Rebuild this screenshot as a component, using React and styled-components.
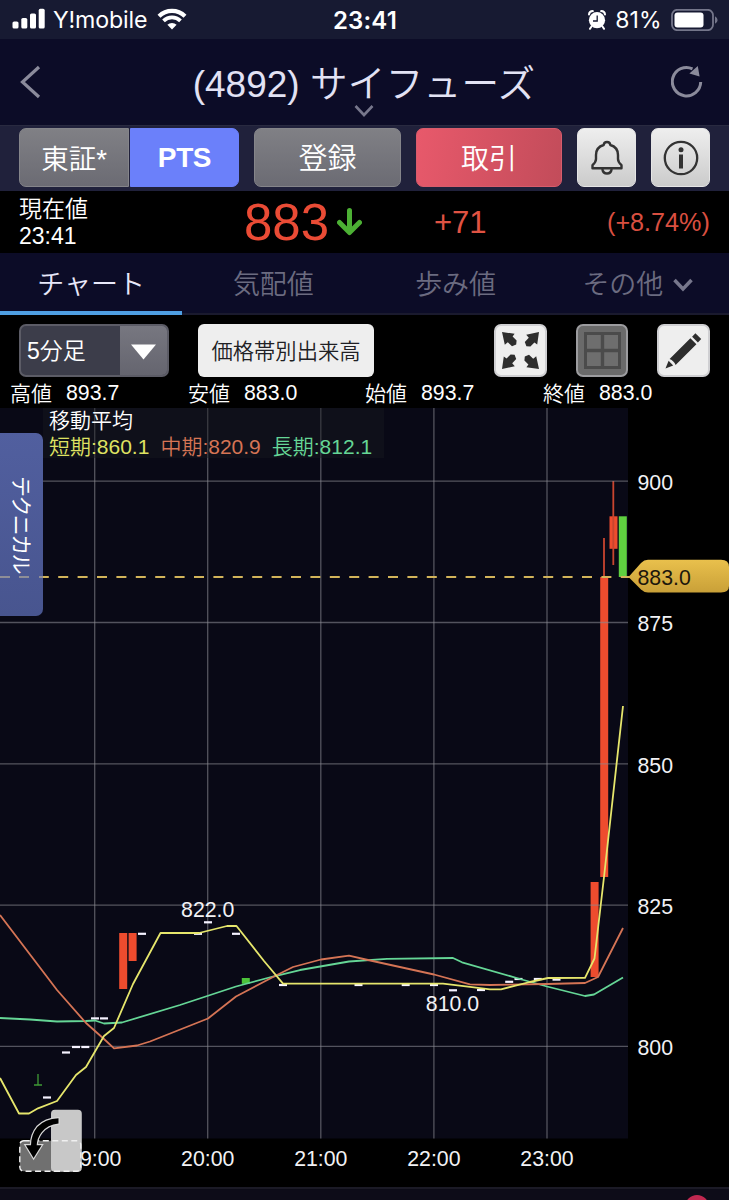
import React from "react";
import styled, { createGlobalStyle } from "styled-components";

const latin = `"Liberation Sans", "Noto Sans CJK JP", sans-serif`;

const Global = createGlobalStyle`
  * { box-sizing: border-box; }
  body { margin: 0; background: #000; font-family: ${latin}; font-weight: 350; overflow: hidden; }
`;

const Screen = styled.div`
  width: 729px;
  height: 1200px;
  overflow: hidden;
  display: flex;
  flex-direction: column;
  color: #fff;
  white-space: nowrap;
`;

const Label = styled.span`
  display: block;
  font-size: ${(p) => p.$size}px;
  line-height: 1;
  font-weight: ${(p) => p.$weight || 350};
  letter-spacing: ${(p) => p.$track || 0}px;
  color: ${(p) => p.$color || "inherit"};
  transform: translateY(${(p) => p.$dy || 0}px);
`;

const Kana = styled.span`
  display: inline-block;
  font-size: 37.6px;
  line-height: 1;
  letter-spacing: 0.3px;
  transform: translateY(-0.5px);
`;

const StatusBar = styled.header`
  height: 39px;
  flex: none;
  background: #171a32;
  display: grid;
  grid-template-columns: 1fr auto 1fr;
  align-items: center;
  padding: 0 11px 0 12px;
  font-family: Inter, sans-serif;
`;

const StatusGroup = styled.div`
  display: flex;
  align-items: center;
  gap: ${(p) => p.$gap}px;
  justify-content: ${(p) => (p.$end ? "flex-end" : "flex-start")};
`;

const TitleBar = styled.div`
  height: 86px;
  flex: none;
  background: #0c0c27;
  display: grid;
  grid-template-columns: 44px 1fr 44px;
  align-items: center;
  padding: 0 26px 0 12px;
  color: #e2e2f4;
`;

const TitleStack = styled.div`
  display: flex;
  flex-direction: column;
  align-items: center;
  gap: 2px;
  padding: 19px 0 0 13px;
`;

const ActionBar = styled.div`
  height: 66px;
  flex: none;
  background: #20213b;
  border-top: 1px solid #292a40;
  display: flex;
  padding: 2px 19px 0;
`;

const Action = styled.button`
  width: ${(p) => p.$w}px;
  height: 59px;
  margin: 0 ${(p) => p.$gap ?? 15}px 0 0;
  padding: 0;
  border: 1px solid ${(p) => p.$edge || "#85858a"};
  border-radius: ${(p) => p.$radius || "7px"};
  background: ${(p) => p.$bg || "linear-gradient(#808085, #6b6b73)"};
  color: #fff;
  display: flex;
  align-items: center;
  justify-content: center;
  font-family: inherit;
`;

const PriceBar = styled.div`
  height: 62px;
  flex: none;
  background: #000;
  display: grid;
  grid-template-columns: 225px 190px 173px 1fr;
  align-items: center;
  padding: 0 19px;
`;

const NowLabel = styled.div`
  display: flex;
  flex-direction: column;
  gap: 4px;
`;

const PriceValue = styled.div`
  display: flex;
  align-items: center;
  gap: 8px;
`;

const Tabs = styled.nav`
  height: 62px;
  flex: none;
  background: #0c0c27;
  border-bottom: 2px solid #1a1a2e;
  display: grid;
  grid-template-columns: repeat(4, 1fr);
`;

const Tab = styled.div`
  height: 62px;
  display: flex;
  gap: 10px;
  align-items: center;
  justify-content: center;
  padding-top: 6px;
  color: ${(p) => (p.$on ? "#e8e8fa" : "#6b6b80")};
  border-bottom: 4px solid ${(p) => (p.$on ? "#4f9fe2" : "transparent")};
`;

const Controls = styled.div`
  height: 66px;
  flex: none;
  display: flex;
  padding: 9px 18px 0 19px;
`;

const Interval = styled.div`
  width: 150px;
  height: 53px;
  border: 2px solid #5c5c66;
  border-radius: 7px;
  background: #3c3d4a;
  display: flex;
  overflow: hidden;
`;

const IntervalText = styled.div`
  flex: 1;
  display: flex;
  align-items: center;
  padding: 2px 0 0 6px;
`;

const IntervalArrow = styled.div`
  width: 47px;
  background: linear-gradient(#777780, #65656f);
  display: flex;
  align-items: center;
  justify-content: center;
  padding-top: 3px;
`;

const VolumeButton = styled.div`
  width: 176px;
  height: 53px;
  margin: 0 120px 0 29px;
  border-radius: 6px;
  background: #eeeeee;
  color: #202024;
  display: flex;
  align-items: center;
  justify-content: center;
`;

const Tool = styled.div`
  width: 52.5px;
  height: 53px;
  margin-right: ${(p) => (p.$last ? 0 : 29)}px;
  border: 2px solid ${(p) => (p.$dim ? "#9c9c9f" : "#cfcfd2")};
  border-radius: 7px;
  background: ${(p) => (p.$dim ? "#6a6a6a" : "#eeeeee")};
  flex: none;
`;

const Quotes = styled.div`
  height: 27px;
  flex: none;
  display: grid;
  grid-template-columns: 178px 177px 178px 1fr;
  align-items: center;
  padding: 0 0 2px 10px;
`;

const Quote = styled.div`
  display: flex;
  gap: 14px;
`;

const ChartArea = styled.div`
  position: relative;
  height: 779px;
  flex: none;
`;

const Legend = styled.div`
  position: absolute;
  left: 43px;
  top: 0;
  width: 341px;
  height: 50px;
  padding: 2px 0 0 6px;
  background: rgba(24, 27, 30, 0.45);
  display: flex;
  flex-direction: column;
  gap: 5px;
`;

const LegendRow = styled.div`
  display: flex;
  gap: 11px;
`;

const Technical = styled.div`
  position: absolute;
  left: 0;
  top: 25px;
  width: 43px;
  height: 183px;
  border-radius: 0 7px 7px 0;
  background: linear-gradient(#515f9f, #48558f);
  display: flex;
  align-items: center;
  justify-content: center;
  &::after {
    content: "";
    position: absolute;
    left: 0;
    right: 0;
    top: 143px;
    height: 2px;
    background: repeating-linear-gradient(90deg, #8e8e97 0 10px, transparent 10px 19.4px);
  }
`;

const VerticalText = styled.span`
  writing-mode: vertical-rl;
  text-orientation: sideways;
  font-size: 21px;
  line-height: 1;
  letter-spacing: -1.6px;
  font-weight: 400;
`;

const Rotate = styled.div`
  position: absolute;
  left: 18px;
  top: 701px;
`;

const BottomBar = styled.footer`
  height: 13px;
  flex: none;
  background: #0d0c18;
  border-top: 2px solid #1b1a26;
  overflow: hidden;
  padding: 6px 0 0 685px;
`;

const Badge = styled.div`
  width: 24px;
  height: 24px;
  border-radius: 50%;
  background: #c02850;
`;

const SignalIcon = () => (
  <svg width="33" height="22" viewBox="0 0 33 22" fill="#fff">
    <rect x="0.5" y="13.5" width="6" height="7" rx="1.6" />
    <rect x="9.3" y="10" width="6" height="10.5" rx="1.6" />
    <rect x="18" y="5.5" width="6" height="15" rx="1.6" />
    <rect x="26.7" y="0.8" width="6" height="19.7" rx="1.6" />
  </svg>
);

const WifiIcon = () => (
  <svg width="34" height="22" viewBox="-2 0 34 22" fill="none" stroke="#fff">
    <path d="M2 8.2 A18.6 18.6 0 0 1 28 8.2" strokeWidth="4.2" />
    <path d="M6.5 12.8 A12.2 12.2 0 0 1 23.5 12.8" strokeWidth="3.8" />
    <path d="M15 21.5 L10.4 16.8 A6.5 6.5 0 0 1 19.6 16.8 Z" fill="#fff" stroke="none" />
  </svg>
);

const AlarmIcon = () => (
  <svg width="18" height="20" viewBox="0 0 18 20">
    <circle cx="9" cy="10.2" r="8.1" fill="#fff" />
    <path d="M1 4.5 Q1.2 1.2 4.8 1.1 M17 4.5 Q16.8 1.2 13.2 1.1" stroke="#fff" strokeWidth="2" fill="none" strokeLinecap="round" />
    <path d="M3.5 16.5 L2 18.8 M14.5 16.5 L16 18.8" stroke="#fff" strokeWidth="2" strokeLinecap="round" />
    <path d="M9.2 5.5 V11 H5" stroke="#171a32" strokeWidth="1.3" fill="none" />
  </svg>
);

const BatteryIcon = () => (
  <svg width="47" height="22" viewBox="0 0 47 22">
    <rect x="1" y="0.8" width="41" height="20.4" rx="5.5" fill="none" stroke="#74768a" strokeWidth="1.8" />
    <rect x="3.5" y="3.4" width="29" height="15.2" rx="3" fill="#fff" />
    <path d="M44 7.2 Q46.6 8.6 46.6 11 Q46.6 13.4 44 14.8Z" fill="#74768a" />
  </svg>
);

const ReloadIcon = () => (
  <svg width="32" height="34" viewBox="0 0 32 34">
    <path d="M21.5 3.8 A14.2 14.2 0 1 0 29.7 17" fill="none" stroke="#8b8b9b" strokeWidth="3" />
    <path d="M26.8 1 L28.6 11.6 L18.4 8.6 Z" fill="#8b8b9b" />
  </svg>
);

const BellIcon = () => (
  <svg width="34" height="36" viewBox="0 0 34 36" fill="none" stroke="#333" strokeWidth="2.4" strokeLinejoin="round">
    <path d="M2.5 28.3 V25.2 Q6 22 6 19 V15 Q6 7.2 13.7 5 Q14 2 17 2 Q20 2 20.3 5 Q28 7.2 28 15 V19 Q28 22 31.5 25.2 V28.3 Z" />
    <path d="M12.3 29 Q13 33.5 17 33.5 Q21 33.5 21.7 29" />
  </svg>
);

const InfoIcon = () => (
  <svg width="36" height="36" viewBox="0 0 36 36">
    <circle cx="18" cy="18" r="16.2" fill="none" stroke="#333" strokeWidth="2.3" />
    <circle cx="18" cy="9.8" r="2.5" fill="#333" />
    <path d="M18 14.5 V28.5" stroke="#333" strokeWidth="4" />
  </svg>
);

const ExpandIcon = () => (
  <svg width="49" height="49" viewBox="0 0 49 49" fill="#2d2d2d">
    {[0, 90, 180, 270].map((a) => (
      <path key={a} transform={`rotate(${a} 24.5 24.5)`} d="M6 6 L18.6 7.8 L16.6 10.6 L20.6 14.6 L20.2 18.6 L16 20.2 L11.8 16.2 L8.8 18.8 Z" />
    ))}
  </svg>
);

const GridIcon = () => (
  <svg width="49" height="49" viewBox="0 0 49 49">
    <rect x="7.5" y="7.5" width="34" height="34" fill="#6e6e6e" stroke="#4b4b4b" strokeWidth="3" />
    <path d="M24.5 7 V42 M7 24.5 H42" stroke="#4b4b4b" strokeWidth="3.4" />
  </svg>
);

const PencilIcon = () => (
  <svg width="49" height="49" viewBox="0 0 49 49" fill="#2d2d2d">
    <path d="M6.5 42.5 L9.6 34.8 L14.2 39.4 Z" />
    <path d="M10.6 33 L31.4 12.2 L37.4 18.2 L16.6 39 Q15 34.8 10.6 33 Z" />
    <path d="M33.1 10.7 L36.4 7.2 L42.2 13 L38.9 16.5 Z" />
  </svg>
);

const RotateIcon = () => (
  <svg width="65" height="64" viewBox="0 0 65 64">
    <rect x="1.8" y="31.8" width="61" height="30.5" rx="4" fill="#707070" />
    <rect x="33" y="0.8" width="30.8" height="62" rx="4" fill="#c8c8c8" />
    <rect x="1.8" y="31.8" width="61" height="30.5" rx="4" fill="none" stroke="#f0f0f0" strokeWidth="1.4" strokeDasharray="6 3.5" />
    <path d="M40.5 9.2 V14.6 Q29.5 15.8 23.4 23.5 Q19 29.2 18.7 36.2 H23.6 L15.6 49 L7.8 36.2 H13 Q13 25.6 19.3 17.9 Q27 9.8 40.5 9.2 Z" fill="#000" stroke="#d8d8d8" strokeWidth="2.4" paintOrder="stroke" />
  </svg>
);

const hours = [
  [94.7, "19:00"],
  [207.7, "20:00"],
  [320.8, "21:00"],
  [433.9, "22:00"],
  [547, "23:00"],
];
const levels = [
  [481.2, "900"],
  [622.5, "875"],
  [763.8, "850"],
  [905.1, "825"],
  [1046.4, "800"],
];
const flats = [
  [47, 1097.5], [66, 1052.5], [76, 1047], [85.3, 1047], [95, 1018.4], [104, 1018.4], [142, 933.8],
  [198, 933.8], [208, 922.3], [236, 933.8], [283, 985], [358.5, 985], [405.7, 985], [434, 985],
  [453, 990.3], [481, 990], [509.2, 981.8], [518.5, 979], [537.8, 979], [556.5, 979.6],
];
const bodies = [
  [119.2, 933, 56, "#ee4c2e"], [128.6, 933, 28, "#ee4c2e"],
  [590.6, 882, 95, "#ee4c2e"], [600.2, 577, 300, "#ee4c2e"],
  [609.5, 516.3, 32.5, "#ee4c2e"], [618.8, 516.3, 60.7, "#5fd040"],
  [241.8, 978, 5.8, "#4cc23a"],
];
const shortLine = "0,1078 19,1113.5 29,1113.5 38,1108.3 57,1101 76,1075 86,1067 104,1036 114,1028 133,984 160.5,933 199,933 227,926 236.5,926 264,961 283,983.7 443,983.7 470,986.8 490,989.3 501,989.3 530,982 548,978 585,977.8 594.5,958.5 604,877 623,706";
const midLine = "0,915 57,990 86,1023 104,1039 114,1048.3 137,1045.5 150,1041.5 208,1018.5 236,996.5 274,976.5 293,967 321,959.5 349,955.7 368,960 434,974.5 470,984.3 490,985 547,984 585,983 598,977 623,928";
const longLine = "0,1018 30,1019.5 57,1021.5 86,1021 95,1020.5 104,1023.5 122,1022.5 180,1005 236,986.5 273,976.5 300,970 349,961.5 387,958.8 453,958 462,962.3 520,979 547,986.5 585,996 594,994.5 623,977.5";

const ChartSvg = styled.svg`
  display: block;
  font-family: ${latin};
  font-size: 21.3px;
  font-weight: 400;
`;

const Chart = () => (
  <ChartSvg width="729" height="779" viewBox="0 408 729 779">
    <rect x="0" y="408" width="628" height="730.5" fill="#090916" />
    {bodies.map(([x, y, h, c]) => (
      <rect key={x} x={x} y={y} width={8} height={h} fill={c} />
    ))}
    <path d="M604 538V577M613.3 481V565" stroke="#c9452f" strokeWidth="1.8" />
    <path d="M38 1074V1085M34 1085H42" stroke="#3f9a36" strokeWidth="1.3" />
    <g stroke="#8a8a92" strokeOpacity="0.58" strokeWidth="1.3">
      {hours.map(([x]) => <line key={x} x1={x} x2={x} y1="408" y2="1138.5" />)}
      {levels.map(([y]) => <line key={y} x1="0" x2="628" y1={y} y2={y} />)}
    </g>
    <g fill="#f5f2ff">
      {flats.map(([x, y]) => <rect key={x} x={x - 4} y={y - 1.1} width="8" height="2.2" />)}
    </g>
    <g fill="none" strokeWidth="1.8" strokeLinejoin="round">
      <polyline points={longLine} stroke="#65d696" />
      <polyline points={midLine} stroke="#d57455" />
      <polyline points={shortLine} stroke="#e6e66c" />
    </g>
    <line x1="0" x2="630" y1="577" y2="577" stroke="#d2b45a" strokeWidth="1.9" strokeDasharray="10 9.4" />
    <path d="M628.5 577 L641 563 Q644 559.8 648 559.8 H721 Q729 559.8 729 567 V586 Q729 592.5 721 592.5 H648 Q644 592.5 641 589.5 Z" fill="url(#gold)" />
    <defs>
      <linearGradient id="gold" x1="0" x2="0" y1="0" y2="1">
        <stop offset="0" stopColor="#e9c04c" />
        <stop offset="1" stopColor="#c9a038" />
      </linearGradient>
    </defs>
    <g fill="#f2f2f5">
      {levels.map(([y, t]) => (
        <text key={t} x="637.5" y={y + 8.8}>{t}</text>
      ))}
      {hours.map(([x, t]) => (
        <text key={t} x={x} y="1166" textAnchor="middle">{t}</text>
      ))}
      <text x="207.7" y="917" textAnchor="middle">822.0</text>
      <text x="452.5" y="1010.5" textAnchor="middle">810.0</text>
    </g>
    <text x="637.5" y="584.7" fill="#1c170c">883.0</text>
  </ChartSvg>
);

const quotes = [["高値", "893.7"], ["安値", "883.0"], ["始値", "893.7"], ["終値", "883.0"]];

export default function App() {
  return (
    <>
      <Global />
      <Screen>
        <StatusBar>
          <StatusGroup $gap={8}>
            <SignalIcon />
            <Label $size={23.2} $weight={400} $track={-0.15} $dy={1}>Y!mobile</Label>
            <WifiIcon />
          </StatusGroup>
          <Label $size={24} $weight={600} $track={0.2} $dy={0.5}>23:41</Label>
          <StatusGroup $gap={9.5} $end>
            <AlarmIcon />
            <Label $size={23} $weight={400} $dy={1}>81%</Label>
            <BatteryIcon />
          </StatusGroup>
        </StatusBar>

        <TitleBar>
          <svg width="34" height="36" viewBox="0 0 34 36" fill="none" stroke="#8b8b9b" strokeWidth="3.2">
            <path d="M27 3 L10.5 18 L27 33" />
          </svg>
          <TitleStack>
            <Label $size={37} $dy={1}>(4892) <Kana>サイフューズ</Kana></Label>
            <svg width="20" height="14" viewBox="0 0 20 14" fill="none" stroke="#77778c" strokeWidth="2.6">
              <path d="M1.5 2 L10 11 L18.5 2" />
            </svg>
          </TitleStack>
          <StatusGroup $end><ReloadIcon /></StatusGroup>
        </TitleBar>

        <ActionBar>
          <Action $w={110} $gap={1} $radius="7px 0 0 7px"><Label $size={27.5} $dy={1.5}>東証*</Label></Action>
          <Action $w={109} $radius="0 7px 7px 0" $bg="#6b80fa" $edge="#6b80fa"><Label $size={28} $weight={700} $track={-0.4}>PTS</Label></Action>
          <Action $w={147}><Label $size={29} $dy={2}>登録</Label></Action>
          <Action $w={146} $bg="linear-gradient(100deg, #e8596b, #c24c5a)" $edge="#d85c6c"><Label $size={28} $dy={2}>取引</Label></Action>
          <Action $w={59} $bg="linear-gradient(#eeeeee, #cbcbcb)" $edge="#e5e5e5"><BellIcon /></Action>
          <Action $w={59} $gap={0} $bg="linear-gradient(#eeeeee, #cbcbcb)" $edge="#e5e5e5"><InfoIcon /></Action>
        </ActionBar>

        <PriceBar>
          <NowLabel>
            <Label $size={23} $dy={1}>現在値</Label>
            <Label $size={23} $dy={1}>23:41</Label>
          </NowLabel>
          <PriceValue>
            <Label $size={51} $color="#ea4b35">883</Label>
            <svg width="25" height="28" viewBox="0 0 25 28" fill="none" stroke="#4cb034" strokeWidth="5">
              <path d="M12.5 2.5 V24 M2.5 14.5 L12.5 24.5 L22.5 14.5" strokeLinecap="round" strokeLinejoin="round" />
            </svg>
          </PriceValue>
          <Label $size={31} $color="#e05343">+71</Label>
          <Label $size={25.2} $color="#d94f40" $dy={1}>(+8.74%)</Label>
        </PriceBar>

        <Tabs>
          <Tab $on><Label $size={27}>チャート</Label></Tab>
          <Tab><Label $size={27}>気配値</Label></Tab>
          <Tab><Label $size={27}>歩み値</Label></Tab>
          <Tab>
            <Label $size={27}>その他</Label>
            <svg width="20" height="14" viewBox="0 0 20 14" fill="none" stroke="#77778c" strokeWidth="3.5">
              <path d="M1.5 2 L10 11 L18.5 2" />
            </svg>
          </Tab>
        </Tabs>

        <Controls>
          <Interval>
            <IntervalText><Label $size={23}>5分足</Label></IntervalText>
            <IntervalArrow>
              <svg width="25" height="16" viewBox="0 0 25 16"><path d="M0 0.5H25L12.5 15.5Z" fill="#fff" /></svg>
            </IntervalArrow>
          </Interval>
          <VolumeButton><Label $size={21.3} $dy={1.5}>価格帯別出来高</Label></VolumeButton>
          <Tool><ExpandIcon /></Tool>
          <Tool $dim><GridIcon /></Tool>
          <Tool $last><PencilIcon /></Tool>
        </Controls>

        <Quotes>
          {quotes.map(([k, v]) => (
            <Quote key={k}>
              <Label $size={21}>{k}</Label>
              <Label $size={21.3} $dy={-0.5}>{v}</Label>
            </Quote>
          ))}
        </Quotes>

        <ChartArea>
          <Chart />
          <Legend>
            <Label $size={21}>移動平均</Label>
            <LegendRow>
              <Label $size={21} $color="#dfe262">短期:860.1</Label>
              <Label $size={21} $color="#d57455">中期:820.9</Label>
              <Label $size={21} $color="#65d696">長期:812.1</Label>
            </LegendRow>
          </Legend>
          <Technical><VerticalText>テクニカル</VerticalText></Technical>
          <Rotate><RotateIcon /></Rotate>
        </ChartArea>

        <BottomBar><Badge /></BottomBar>
      </Screen>
    </>
  );
}
